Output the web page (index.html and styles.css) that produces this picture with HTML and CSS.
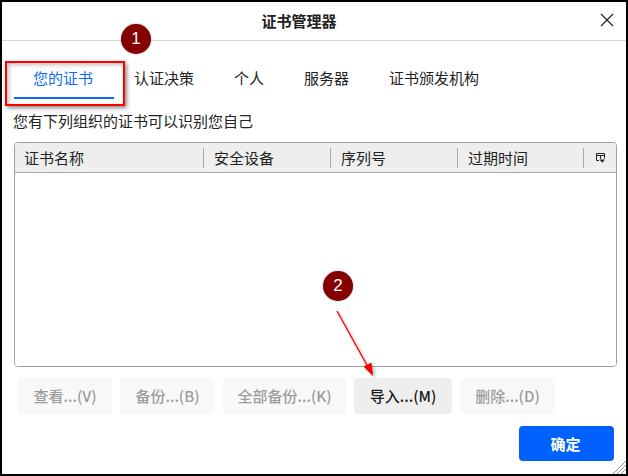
FILE: index.html
```html
<!DOCTYPE html>
<html lang="zh-CN">
<head>
<meta charset="utf-8">
<title>证书管理器</title>
<link rel="stylesheet" href="styles.css">
</head>
<body>
<div class="window">
  <header class="titlebar">
    <h1 class="title">证书管理器</h1>
    <svg class="close" width="14" height="14" viewBox="0 0 14 14"><path d="M1 1L13 13M13 1L1 13" stroke="#222" stroke-width="1.2" fill="none"/></svg>
  </header>
  <nav class="tabs">
    <div class="tab tab-active"><span class="tab-label">您的证书</span></div>
    <div class="tab tab-2">认证决策</div>
    <div class="tab tab-3">个人</div>
    <div class="tab tab-4">服务器</div>
    <div class="tab tab-5">证书颁发机构</div>
  </nav>
  <p class="intro">您有下列组织的证书可以识别您自己</p>
  <section class="table">
    <div class="thead">
      <div class="th col-1">证书名称</div>
      <div class="th col-2">安全设备</div>
      <div class="th col-3">序列号</div>
      <div class="th col-4">过期时间</div>
      <div class="th col-5">
        <svg width="10" height="10" viewBox="0 0 10 10"><path d="M0.5 7.5V0.5H8.5V5.5M0.5 2.5H8.5M4.5 2.5V6M0.5 7.5H3" stroke="#222" fill="none"/><path d="M3.5 6.5H9L6.25 9.8Z" fill="#222"/></svg>
      </div>
    </div>
    <div class="tbody"></div>
  </section>
  <div class="actions">
    <button class="btn btn-disabled b-view">查看...(V)</button>
    <button class="btn btn-disabled b-backup">备份...(B)</button>
    <button class="btn btn-disabled b-all">全部备份...(K)</button>
    <button class="btn btn-enabled b-import">导入...(M)</button>
    <button class="btn btn-disabled b-delete">删除...(D)</button>
  </div>
  <footer class="footer">
    <button class="btn-ok">确定</button>
  </footer>
  <svg class="grip" width="14" height="14" viewBox="0 0 14 14"><path d="M14 1L1 14M14 5L5 14M14 9L9 14" stroke="#999" fill="none"/></svg>

  <div class="badge badge-1">1</div>
  <div class="badge badge-2">2</div>
  <div class="redbox"></div>
  <svg class="arrow" width="60" height="80" viewBox="0 0 60 80">
    <defs><filter id="s" x="-30%" y="-30%" width="160%" height="160%"><feDropShadow dx="2" dy="2" stdDeviation="1.5" flood-color="#000" flood-opacity="0.3"/></filter></defs>
    <g filter="url(#s)"><path d="M3 4L34 60" stroke="#f00" stroke-width="1.4" fill="none"/><path d="M39 69L29.5 59.5L37.5 55.5Z" fill="#e00"/></g>
  </svg>
</div>
</body>
</html>
```
FILE: styles.css
```css
* { box-sizing: border-box; }
html, body { margin: 0; padding: 0; }
body {
  width: 628px;
  height: 476px;
  overflow: hidden;
  font-family: "Noto Sans CJK SC", "Liberation Sans", sans-serif;
  font-size: 15px;
  color: #222;
  background: #fff;
}
.window {
  position: relative;
  width: 628px;
  height: 476px;
  border: 2px solid #000;
  background: #fff;
  display: flex;
  flex-direction: column;
}
.titlebar {
  height: 39px;
  flex: none;
  border-bottom: 1px solid #d5d5d5;
  display: flex;
  align-items: center;
  justify-content: center;
  padding: 0 30px 2px 0;
  position: relative;
}
.title { margin: 0; font-size: 15px; font-weight: 700; line-height: 1; color: #222; }
.close { position: absolute; right: 12px; top: 11px; }
.tabs {
  display: flex;
  padding-left: 12px;
  height: 58px;
  flex: none;
}
.tab { height: 58px; padding-top: 24px; line-height: 26px; white-space: nowrap; }
.tab-active {
  width: 100px;
  text-align: center;
  color: #0a6cf5;
  border-bottom: 2px solid #0a6cf5;
  margin-right: 20px;
}
.tab-label { display: block; padding-right: 2px; }
.tab-3, .tab-4, .tab-5 { margin-left: 40px; }
.intro { margin: 9px 0 0 11px; line-height: 26px; height: 26px; flex: none; }
.table {
  margin: 8px 9px 0 12px;
  height: 225px;
  flex: none;
  border: 1px solid #a0a0a0;
  border-radius: 4px;
  overflow: hidden;
  display: flex;
  flex-direction: column;
}
.thead {
  display: flex;
  height: 30px;
  flex: none;
  background: #eeeeee;
  border-bottom: 1px solid #a9a9b0;
  padding-top: 5px;
}
.th {
  height: 20px;
  line-height: 20px;
  padding-left: 10px;
  border-right: 1px solid #a8a8a8;
  white-space: nowrap;
}
.col-1 { width: 189px; padding-left: 9px; }
.col-2 { width: 127px; }
.col-3 { width: 127px; }
.col-4 { width: 126px; }
.col-5 { flex: 1; border-right: 0; padding-left: 12px; display: flex; align-items: center; }
.tbody { flex: 1; background: #fff; }
.actions {
  display: flex;
  gap: 8px;
  margin: 11px 0 0 16px;
  flex: none;
}
.btn {
  height: 36px;
  border: 0;
  border-radius: 4px;
  padding: 0;
  font: 500 15px/36px "Noto Sans CJK SC", "Liberation Sans", sans-serif;
  white-space: nowrap;
}
.btn-disabled { background: #f8f8f8; color: #9c9c9c; }
.btn-enabled { background: #eeeeee; color: #1a1a1a; }
.b-view { width: 94px; }
.b-backup { width: 95px; }
.b-all { width: 123px; }
.b-import { width: 98px; }
.b-delete { width: 95px; }
.footer {
  display: flex;
  justify-content: flex-end;
  padding-right: 12px;
  margin-top: 12px;
  flex: none;
}
.btn-ok {
  width: 95px;
  height: 35px;
  border: 0;
  border-radius: 4px;
  background: #0061ff;
  color: #fff;
  font: 700 15px/35px "Noto Sans CJK SC", "Liberation Sans", sans-serif;
  padding: 0 2px 0 0;
}
.grip { position: absolute; right: 0; bottom: 0; }
.badge {
  position: absolute;
  width: 30px;
  height: 30px;
  border-radius: 50%;
  background: #850000;
  color: #fff;
  font: 400 17px/30px "Liberation Sans", sans-serif;
  text-align: center;
  box-shadow: 0 0 2px rgba(0,0,0,.4);
}
.badge-1 { left: 119px; top: 22px; }
.badge-2 { left: 321px; top: 269px; }
.redbox {
  position: absolute;
  left: 3px;
  top: 59px;
  width: 120px;
  height: 45px;
  border: 2px solid #f00;
  box-shadow: 2px 2px 4px rgba(0,0,0,.45), inset 2px 2px 4px rgba(0,0,0,.25);
}
.arrow { position: absolute; left: 332px; top: 305px; }
```
